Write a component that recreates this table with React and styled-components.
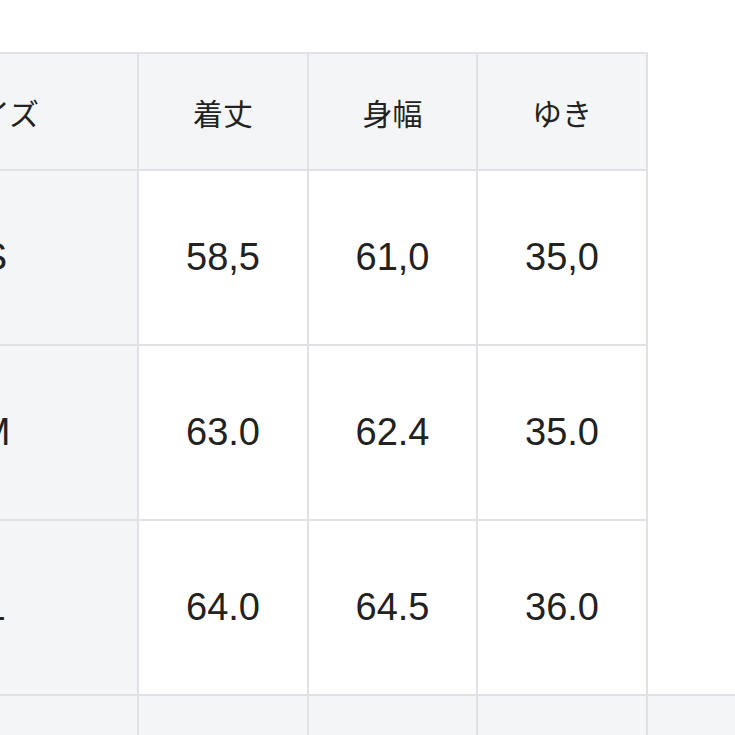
import React from 'react'
import styled, { createGlobalStyle } from 'styled-components'

const GlobalStyle = createGlobalStyle`
  html, body {
    margin: 0;
    padding: 0;
    background: #ffffff;
    overflow: hidden;
  }
  body {
    font-family: "Liberation Sans", "Noto Sans CJK JP", sans-serif;
    color: #222222;
  }
`

const LINE = '#dfe1e4'
const SHADE = '#f4f5f6'

const headers = ['サイズ', '着丈', '身幅', 'ゆき']
const rows = [
  { size: 'S', values: ['58,5', '61,0', '35,0'] },
  { size: 'M', values: ['63.0', '62.4', '35.0'] },
  { size: 'L', values: ['64.0', '64.5', '36.0'] },
]
const colWidths = [287, 170, 169, 170]

const Page = styled.div`
  padding-top: 52px;
  width: 1100px;
`

const SizeTable = styled.table`
  margin-left: -150px;
  border-collapse: separate;
  border-spacing: 0;
  table-layout: fixed;
  border-top: 2px solid ${LINE};
  border-left: 2px solid ${LINE};
`

const HeadCell = styled.th`
  box-sizing: border-box;
  height: 117px;
  padding: 0;
  background: ${SHADE};
  border-right: 2px solid ${LINE};
  border-bottom: 2px solid ${LINE};
  font-family: "Noto Sans CJK JP", "Liberation Sans", sans-serif;
  font-size: 30px;
  font-weight: 400;
  text-align: center;
  vertical-align: middle;
`

const Cell = styled.td`
  box-sizing: border-box;
  height: ${(p) => (p.$last ? 173 : 175)}px;
  padding: 0;
  background: ${(p) => (p.$shade ? SHADE : '#ffffff')};
  border-right: 2px solid ${LINE};
  border-bottom: ${(p) => (p.$last ? 'none' : `2px solid ${LINE}`)};
  font-size: 38px;
  text-align: center;
  vertical-align: middle;
`

const NextTable = styled.table`
  margin-left: -150px;
  border-collapse: separate;
  border-spacing: 0;
  table-layout: fixed;
  border-top: 2px solid ${LINE};
  border-left: 2px solid ${LINE};
`

const NextCell = styled.th`
  box-sizing: border-box;
  height: 60px;
  padding: 0;
  background: ${SHADE};
  border-right: 2px solid ${LINE};
`

const App = () => {
  return (
    <>
      <GlobalStyle />
      <Page>
        <SizeTable>
          <colgroup>
            {colWidths.map((w, i) => (
              <col key={i} style={{ width: w }} />
            ))}
          </colgroup>
          <thead>
            <tr>
              {headers.map((h) => (
                <HeadCell key={h}>{h}</HeadCell>
              ))}
            </tr>
          </thead>
          <tbody>
            {rows.map((row, i) => (
              <tr key={row.size}>
                <Cell $shade $last={i === rows.length - 1}>{row.size}</Cell>
                {row.values.map((v, j) => (
                  <Cell key={j} $last={i === rows.length - 1}>{v}</Cell>
                ))}
              </tr>
            ))}
          </tbody>
        </SizeTable>
        <NextTable>
          <colgroup>
            {[...colWidths, 170, 170].map((w, i) => (
              <col key={i} style={{ width: w }} />
            ))}
          </colgroup>
          <thead>
            <tr>
              {[...colWidths, 170, 170].map((w, i) => (
                <NextCell key={i} />
              ))}
            </tr>
          </thead>
        </NextTable>
      </Page>
    </>
  )
}

export default App
